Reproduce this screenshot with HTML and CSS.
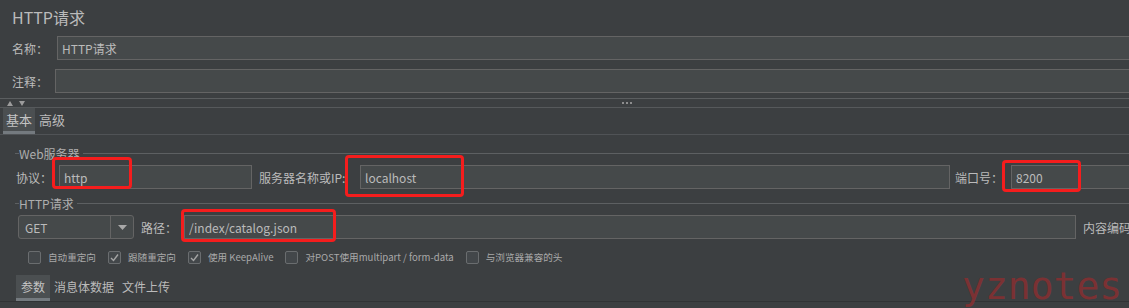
FILE: index.html
```html
<!DOCTYPE html>
<html lang="zh-CN">
<head>
  <meta charset="UTF-8">
  <meta name="viewport" content="width=device-width, initial-scale=1.0">
  <title>HTTP请求</title>
  <link rel="stylesheet" href="styles.css">
</head>
<body>
  <div class="panel">
    <div class="panel-title">HTTP请求</div>

    <div class="field-row">
      <label class="field-label name-label">名称：</label>
      <input class="text-input wide-input" type="text" value="HTTP请求">
    </div>
    <div class="field-row">
      <label class="field-label comment-label">注释：</label>
      <input class="text-input wide-input" type="text" value="">
    </div>

    <div class="splitter">
      <svg class="split-arrows" width="19" height="5" viewBox="0 0 19 5">
        <polygon points="0,5 3,0 6,5" fill="#9c9c9c"/>
        <polygon points="12,0 18,0 15,5" fill="#9c9c9c"/>
      </svg>
      <span class="split-dots"><i></i><i></i><i></i></span>
    </div>

    <div class="tabs top-tabs">
      <div class="tab active">基本</div>
      <div class="tab">高级</div>
    </div>

    <!-- Web服务器 -->
    <div class="group-title web-title">Web服务器</div>
    <div class="server-row">
      <label class="field-label">协议：</label>
      <input class="text-input" type="text" value="http">
      <label class="field-label server-label">服务器名称或IP:</label>
      <input class="text-input" type="text" value="localhost">
      <label class="field-label port-label">端口号：</label>
      <input class="text-input open-input" type="text" value="8200">
    </div>

    <!-- HTTP请求 -->
    <div class="group-title http-title">HTTP请求</div>
    <div class="method-row">
      <div class="combo">
        <span class="combo-value">GET</span>
        <span class="combo-button">
          <svg width="9" height="5" viewBox="0 0 9 5"><polygon points="0,0 9,0 4.5,5" fill="#a8a8a8"/></svg>
        </span>
      </div>
      <label class="field-label path-label">路径：</label>
      <input class="text-input" type="text" value="/index/catalog.json">
      <label class="field-label encoding-label">内容编码</label>
    </div>

    <div class="check-row">
      <div class="check-item"><span class="checkbox"></span>自动重定向</div>
      <div class="check-item"><span class="checkbox checked"><svg width="11" height="11" viewBox="0 0 11 11"><polyline points="2,6 4.5,8.5 9,2.5" fill="none" stroke="#a5a5a5" stroke-width="1.4"/></svg></span>跟随重定向</div>
      <div class="check-item"><span class="checkbox checked"><svg width="11" height="11" viewBox="0 0 11 11"><polyline points="2,6 4.5,8.5 9,2.5" fill="none" stroke="#a5a5a5" stroke-width="1.4"/></svg></span>使用 KeepAlive</div>
      <div class="check-item"><span class="checkbox"></span>对POST使用multipart / form-data</div>
      <div class="check-item"><span class="checkbox"></span>与浏览器兼容的头</div>
    </div>

    <div class="tabs bottom-tabs">
      <div class="tab active">参数</div>
      <div class="tab">消息体数据</div>
      <div class="tab">文件上传</div>
    </div>

    <!-- 标注 -->
    <div class="mark mark-protocol"></div>
    <div class="mark mark-server"></div>
    <div class="mark mark-port"></div>
    <div class="mark mark-path"></div>
    <div class="watermark">yznotes</div>
  </div>
</body>
</html>
```

FILE: styles.css
```css
* {
  box-sizing: border-box;
}
body {
  margin: 0;
  background-color: #3c3f41;
  color: #bbbbbb;
  font-family: "Noto Sans CJK SC", sans-serif;
  font-size: 12px;
  overflow: hidden;
}
.panel {
  position: relative;
  height: 308px;
}
.panel-title {
  height: 36px;
  line-height: 34px;
  padding-left: 12px;
  font-size: 16px;
}
.field-row {
  display: flex;
  align-items: center;
  height: 24px;
}
.field-row + .field-row {
  margin-top: 9px;
}
.field-label {
  font-size: 12px;
  white-space: nowrap;
}
.name-label {
  width: 57px;
  padding-left: 12px;
}
.comment-label {
  width: 55px;
  padding-left: 12px;
}
.text-input {
  height: 24px;
  min-width: 0;
  margin: 0;
  padding: 0 4px;
  border: 1px solid #646464;
  background-color: #45494a;
  color: #bbbbbb;
  font-family: "Noto Sans CJK SC", sans-serif;
  font-size: 12px;
  outline: none;
}
.wide-input,
.open-input {
  border-right: none;
}
.wide-input {
  flex: 1;
}

/* splitter */
.splitter {
  display: flex;
  align-items: center;
  height: 10px;
  margin-top: 5px;
  border-top: 1px solid #5b5e60;
  border-bottom: 1px solid #56595b;
}
.split-arrows {
  margin-left: 7px;
}
.split-dots {
  display: flex;
  gap: 2px;
  margin-left: 596px;
}
.split-dots i {
  width: 2px;
  height: 2px;
  background-color: #a8a8a8;
  border-radius: 1px;
}

/* tabs */
.tabs {
  display: flex;
  height: 27px;
  border-bottom: 1px solid #505356;
}
.tab {
  display: flex;
  align-items: center;
  padding: 0 4px;
  border-bottom: 3px solid transparent;
}
.tab.active {
  background-color: #4b4f51;
  border-bottom-color: #747a7f;
  color: #c4c4c4;
}
.top-tabs {
  padding-left: 3px;
}
.top-tabs .tab {
  font-size: 13px;
  padding: 0 3px;
}
.top-tabs .tab + .tab {
  padding-left: 4px;
}
.bottom-tabs {
  margin-top: 9px;
  padding-left: 16px;
  border-bottom-color: #313335;
}
.bottom-tabs .tab {
  padding: 0 5px;
}
.bottom-tabs .tab + .tab {
  padding: 0 4px;
}

/* titled groups */
.group-title {
  display: flex;
  align-items: center;
  height: 18px;
  padding-left: 15px;
  color: #aeaeae;
}
.group-title::before {
  content: "";
  width: 4px;
  border-top: 1px solid #5d6062;
}
.group-title::after {
  content: "";
  flex: 1;
  margin-left: 3px;
  border-top: 1px solid #5d6062;
}
.web-title {
  margin-top: 9px;
}
.http-title {
  margin-top: 5px;
}

.server-row {
  display: grid;
  grid-template-columns: 43px 193px 108px 590px 61px 1fr;
  align-items: center;
  margin-top: 3px;
  padding-left: 16px;
}
.server-label {
  padding-left: 7px;
}
.port-label {
  padding-left: 5px;
}

.method-row {
  display: grid;
  grid-template-columns: 116px 50px 892px 1fr;
  align-items: center;
  margin-top: 3px;
  padding-left: 18px;
}
.combo {
  display: flex;
  height: 24px;
  border: 1px solid #646464;
  border-radius: 3px;
  background-color: #45494a;
}
.combo-value {
  flex: 1;
  display: flex;
  align-items: center;
  padding-left: 6px;
}
.combo-button {
  display: flex;
  align-items: center;
  justify-content: center;
  width: 23px;
  border-left: 1px solid #646464;
}
.path-label {
  padding-left: 7px;
}
.encoding-label {
  padding-left: 7px;
}

/* checkboxes */
.check-row {
  display: flex;
  align-items: center;
  gap: 12px;
  height: 18px;
  margin-top: 9px;
  padding-left: 28px;
  font-size: 9.6px;
  color: #a9a9a9;
}
.check-item {
  display: flex;
  align-items: center;
  gap: 7px;
  white-space: nowrap;
}
.checkbox {
  display: flex;
  align-items: center;
  justify-content: center;
  width: 13px;
  height: 13px;
  border: 1px solid #6a6d6f;
  border-radius: 2px;
  background-color: #43474a;
}

/* annotations */
.mark {
  position: absolute;
  border: 3px solid #f51d1d;
  border-radius: 4px;
}
.mark-protocol {
  left: 52px;
  top: 157px;
  width: 80px;
  height: 32px;
}
.mark-server {
  left: 345px;
  top: 155px;
  width: 119px;
  height: 42px;
}
.mark-port {
  left: 1002px;
  top: 160px;
  width: 79px;
  height: 32px;
}
.mark-path {
  left: 181px;
  top: 209px;
  width: 155px;
  height: 33px;
}
.watermark {
  position: absolute;
  left: 962px;
  top: 267px;
  font-family: "DejaVu Sans Mono", monospace;
  font-size: 38px;
  line-height: 38px;
  color: #7b3133;
}
```
